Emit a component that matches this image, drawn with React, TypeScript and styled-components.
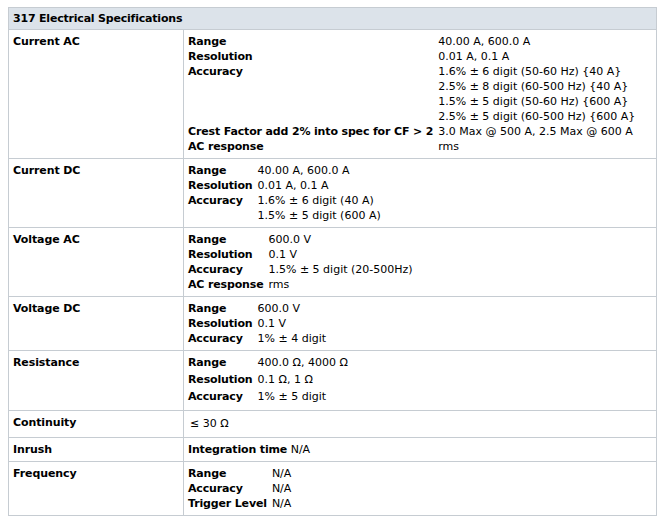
import React from 'react';
import styled, { createGlobalStyle } from 'styled-components';

const GlobalStyle = createGlobalStyle`
  html, body { margin: 0; padding: 0; background: #ffffff; }
  body {
    font-family: "DejaVu Sans", Verdana, sans-serif;
    font-size: 11px;
    line-height: 15px;
    color: #000000;
  }
`;

const Page = styled.div`
  padding: 7px 0 0 8px;
`;

const SpecTable = styled.table`
  width: 649px;
  border-collapse: collapse;
  border: 1px solid #c6ccd2;
`;

const HeaderCell = styled.th`
  background: #dce3ea;
  border: 1px solid #c6ccd2;
  padding: 3px 4px;
  text-align: left;
  font-weight: bold;
  letter-spacing: -0.2px;
`;

const LabelCell = styled.td`
  width: 166px;
  border: 1px solid #c6ccd2;
  padding: 4px 4px;
  vertical-align: top;
  font-weight: bold;
  letter-spacing: -0.1px;
`;

const ValueCell = styled.td<{ $lh?: number; $pl?: number }>`
  border: 1px solid #c6ccd2;
  padding: 4px 4px 4px ${(p) => (p.$pl ? `${p.$pl}px` : '4px')};
  vertical-align: top;
  line-height: ${(p) => (p.$lh ? `${p.$lh}px` : '15px')};
`;

const Inner = styled.table`
  border-collapse: collapse;
`;

const InnerRow = styled.tr<{ $h?: number }>`
  height: ${(p) => (p.$h ? `${p.$h}px` : '15px')};
`;

const InnerLabel = styled.td`
  padding: 0 5px 0 0;
  font-weight: bold;
  letter-spacing: -0.15px;
  white-space: nowrap;
  vertical-align: top;
`;

const InnerValue = styled.td`
  padding: 0;
  vertical-align: top;
  white-space: nowrap;
`;

const Bold = styled.span`
  font-weight: bold;
  letter-spacing: -0.15px;
`;

type Line = [string, string];

const Sub: React.FC<{ lines: Line[]; h?: number }> = ({ lines, h }) => (
  <Inner>
    <tbody>
      {lines.map(([l, v], i) => (
        <InnerRow key={i} $h={h}>
          <InnerLabel>{l}</InnerLabel>
          <InnerValue>{v}</InnerValue>
        </InnerRow>
      ))}
    </tbody>
  </Inner>
);

export default function App() {
  return (
    <>
      <GlobalStyle />
      <Page>
        <SpecTable>
          <tbody>
            <tr>
              <HeaderCell colSpan={2}>317 Electrical Specifications</HeaderCell>
            </tr>
            <tr>
              <LabelCell>Current AC</LabelCell>
              <ValueCell>
                <Sub
                  lines={[
                    ['Range', '40.00 A, 600.0 A'],
                    ['Resolution', '0.01 A, 0.1 A'],
                    ['Accuracy', '1.6% ± 6 digit (50-60 Hz) {40 A}'],
                    ['', '2.5% ± 8 digit (60-500 Hz) {40 A}'],
                    ['', '1.5% ± 5 digit (50-60 Hz) {600 A}'],
                    ['', '2.5% ± 5 digit (60-500 Hz) {600 A}'],
                    ['Crest Factor add 2% into spec for CF > 2', '3.0 Max @ 500 A, 2.5 Max @ 600 A'],
                    ['AC response', 'rms'],
                  ]}
                />
              </ValueCell>
            </tr>
            <tr>
              <LabelCell>Current DC</LabelCell>
              <ValueCell>
                <Sub
                  lines={[
                    ['Range', '40.00 A, 600.0 A'],
                    ['Resolution', '0.01 A, 0.1 A'],
                    ['Accuracy', '1.6% ± 6 digit (40 A)'],
                    ['', '1.5% ± 5 digit (600 A)'],
                  ]}
                />
              </ValueCell>
            </tr>
            <tr>
              <LabelCell>Voltage AC</LabelCell>
              <ValueCell>
                <Sub
                  lines={[
                    ['Range', '600.0 V'],
                    ['Resolution', '0.1 V'],
                    ['Accuracy', '1.5% ± 5 digit (20-500Hz)'],
                    ['AC response', 'rms'],
                  ]}
                />
              </ValueCell>
            </tr>
            <tr>
              <LabelCell>Voltage DC</LabelCell>
              <ValueCell>
                <Sub
                  lines={[
                    ['Range', '600.0 V'],
                    ['Resolution', '0.1 V'],
                    ['Accuracy', '1% ± 4 digit'],
                  ]}
                />
              </ValueCell>
            </tr>
            <tr>
              <LabelCell>Resistance</LabelCell>
              <ValueCell>
                <Sub
                  h={17}
                  lines={[
                    ['Range', '400.0 Ω, 4000 Ω'],
                    ['Resolution', '0.1 Ω, 1 Ω'],
                    ['Accuracy', '1% ± 5 digit'],
                  ]}
                />
              </ValueCell>
            </tr>
            <tr>
              <LabelCell>Continuity</LabelCell>
              <ValueCell $lh={18} $pl={6}>≤ 30 Ω</ValueCell>
            </tr>
            <tr>
              <LabelCell>Inrush</LabelCell>
              <ValueCell>
                <Bold>Integration time</Bold> N/A
              </ValueCell>
            </tr>
            <tr>
              <LabelCell>Frequency</LabelCell>
              <ValueCell>
                <Sub
                  lines={[
                    ['Range', 'N/A'],
                    ['Accuracy', 'N/A'],
                    ['Trigger Level', 'N/A'],
                  ]}
                />
              </ValueCell>
            </tr>
          </tbody>
        </SpecTable>
      </Page>
    </>
  );
}
